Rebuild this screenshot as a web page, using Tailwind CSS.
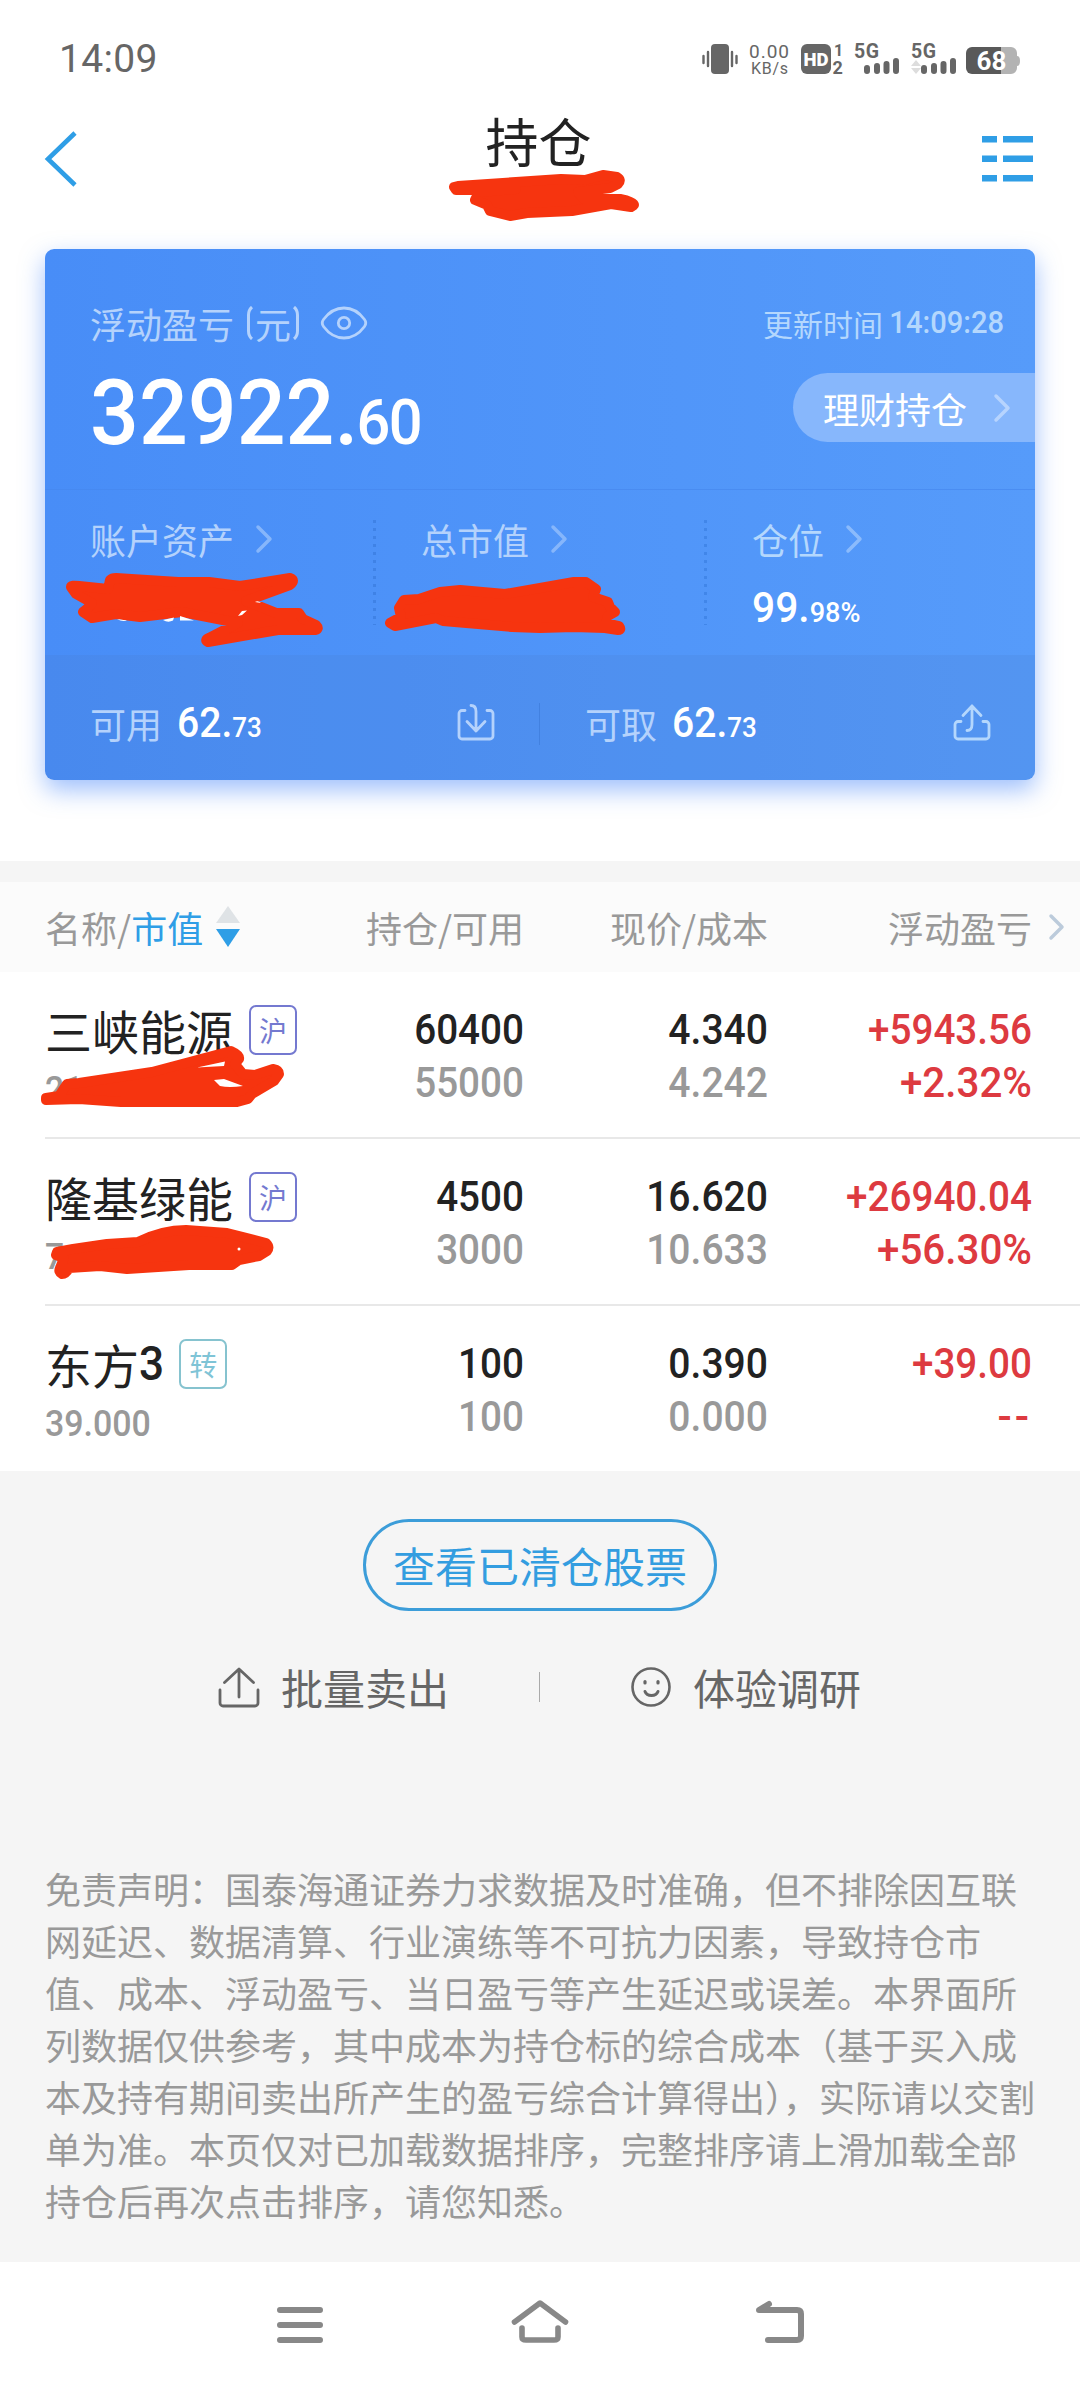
<!DOCTYPE html>
<html lang="zh-CN">
<head>
<meta charset="utf-8">
<title>持仓</title>
<script src="https://cdn.jsdelivr.net/npm/@tailwindcss/browser@4"></script>
</head>
<body class="bg-white">
<div class="relative flex h-[2388px] w-[1080px] flex-col overflow-hidden bg-white font-['Noto_Sans_CJK_SC',sans-serif] text-[#222] whitespace-nowrap">

  <!-- status bar -->
  <div class="flex h-[118px] shrink-0 items-center justify-between pr-[60px] pl-[59px] text-[#666]">
    <div class="font-['Roboto',sans-serif] text-[39px] leading-[40px] tracking-[0.3px]">14:09</div>
    <svg class="h-[48px] w-[320px] shrink-0" viewBox="700 35 320 48" fill="#666" font-family="Roboto, sans-serif">
      <rect x="711" y="44" width="18" height="30" rx="4"/>
      <path d="M703.500 56v7M708 52v14M732 52v14M736.500 56v7" stroke="#666" stroke-width="2.400" stroke-linecap="round"/>
      <text x="749" y="58" font-size="19" textLength="40">0.00</text>
      <text x="751" y="74" font-size="16" textLength="37">KB/s</text>
      <rect x="801" y="44" width="30" height="30" rx="6"/>
      <text x="803.500" y="66" font-size="19" font-weight="900" fill="#fff" textLength="25" lengthAdjust="spacingAndGlyphs">HD</text>
      <text x="834" y="56" font-size="16" font-weight="700">1</text>
      <text x="832.500" y="74" font-size="18" font-weight="700">2</text>
      <text x="854" y="58" font-size="19.500" font-weight="700" textLength="25">5G</text>
      <path d="M867 68v3M877 66v5M886.500 64v7M896 61v10" stroke="#666" stroke-width="6" stroke-linecap="round"/>
      <text x="911" y="58" font-size="19.500" font-weight="700" textLength="25">5G</text>
      <path d="M911 66l5-6 5 6zM911 68h10l-5 6z" fill="#ddd"/>
      <path d="M924 68v3M934 66v5M943.500 64v7M953 61v10" stroke="#666" stroke-width="6" stroke-linecap="round"/>
      <path d="M1001 47h10a6 6 0 0 1 6 6v3q3 0 3 5t-3 5v2a6 6 0 0 1-6 6h-10z" fill="#b3b3b3"/>
      <path d="M972 47h29v27h-29a6 6 0 0 1-6-6v-15a6 6 0 0 1 6-6z" fill="#595959"/>
      <text x="976.500" y="70" font-size="26" font-weight="700" fill="#fff" textLength="30">68</text>
    </svg>
  </div>

  <!-- title bar -->
  <header class="flex h-[131px] shrink-0 items-start justify-between pr-[47px] pl-[44px]">
    <svg class="mt-[13px] h-[56px] w-[52px]" viewBox="0 0 52 56" fill="none" stroke="#2f9ee6" stroke-width="4.600"><path d="M31 2L4 28l27 26"/></svg>
    <h1 class="pt-px text-[53px] leading-[42px]">持仓</h1>
    <svg class="mt-[17px] h-[48px] w-[52px]" viewBox="0 0 52 48" fill="#2f9ee6"><path d="M1 1h15v6.500H1zM22 1h30v6.500H22zM1 20.500h15v6.500H1zM22 20.500h30v6.500H22zM1 40h15v6.500H1zM22 40h30v6.500H22z"/></svg>
  </header>

  <!-- account card -->
  <section class="mx-[45px] flex h-[531px] shrink-0 flex-col overflow-hidden rounded-[9px] bg-linear-to-r from-[#488df7] to-[#569bfa] text-white shadow-[0_10px_24px_rgba(64,130,250,0.5)]">
    <div class="flex h-[241px] shrink-0 justify-between border-b border-[#4688ee]/70">
      <div class="pt-[50px] pl-[45px]">
        <div class="flex items-center text-[36px] leading-[48px] text-[#b4d2fc]">
          <span>浮动盈亏</span>
          <span class="ml-[12px] flex items-center"><svg class="h-[34px] w-[8px]" viewBox="0 0 8 34" fill="none" stroke="#b4d2fc" stroke-width="3"><path d="M6 1Q2.500 4 2.500 9v16q0 5 3.500 8"/></svg><span class="mx-px">元</span><svg class="h-[34px] w-[8px]" viewBox="0 0 8 34" fill="none" stroke="#b4d2fc" stroke-width="3"><path d="M2 1q3.500 3 3.500 8v16q0 5-3.500 8"/></svg></span>
          <svg class="ml-[20px] h-[34px] w-[48px]" viewBox="0 0 48 34" fill="none" stroke="#b4d2fc" stroke-width="2.800"><path d="M3.500 13.500Q12 2 24 2t20.500 11.500q2.500 3.500 0 7Q36 32 24 32T3.500 20.500q-2.500-3.500 0-7z"/><circle cx="24" cy="17" r="5.700"/></svg>
        </div>
        <div class="mt-[18px] w-max origin-left scale-x-[.945] font-['Roboto',sans-serif] text-[91px] leading-[96px] font-medium">32922.<span class="-ml-[2px] text-[63px] tracking-[-1.5px]">60</span></div>
      </div>
      <div class="flex flex-col items-end pt-[50px]">
        <div class="flex items-center pr-[31px] text-[30px] leading-[48px] text-[#b4d7fd]"><span class="mr-[7px]">更新时间</span><span class="-ml-[8px] origin-right scale-x-[.94] font-['Roboto',sans-serif] text-[31px] font-medium">14:09:28</span></div>
        <div class="mt-[26px] flex h-[69px] w-[242px] items-center justify-between rounded-l-full bg-[#87b7fc] pr-[24px] pl-[30px] text-[36px] leading-[60px]"><span>理财持仓</span><svg class="h-[30px] w-[18px]" viewBox="0 0 18 30" fill="none" stroke="#b7d4fe" stroke-width="3.500" stroke-linecap="round" stroke-linejoin="round"><path d="M3 3l12 12L3 27"/></svg></div>
      </div>
    </div>

    <div class="flex h-[165px] shrink-0">
      <div class="w-[328px] pt-[25px] pl-[45px]">
        <div class="flex items-center text-[36px] leading-[48px] text-[#b4d2fc]">账户资产<svg class="ml-[21px] h-[30px] w-[18px]" viewBox="0 0 18 30" fill="none" stroke="#86b6fb" stroke-width="3.500" stroke-linecap="round" stroke-linejoin="round"><path d="M3 3l12 12L3 27"/></svg></div>
      </div>
      <div class="mt-[30px] h-[105px] w-[3px] bg-[repeating-linear-gradient(to_bottom,#3f82e6_0_3px,transparent_3px_8px)]"></div>
      <div class="w-[328px] pt-[25px] pl-[45px]">
        <div class="flex items-center text-[36px] leading-[48px] text-[#b4d2fc]">总市值<svg class="ml-[21px] h-[30px] w-[18px]" viewBox="0 0 18 30" fill="none" stroke="#86b6fb" stroke-width="3.500" stroke-linecap="round" stroke-linejoin="round"><path d="M3 3l12 12L3 27"/></svg></div>
      </div>
      <div class="mt-[30px] h-[105px] w-[3px] bg-[repeating-linear-gradient(to_bottom,#4186e9_0_3px,transparent_3px_8px)]"></div>
      <div class="pt-[25px] pl-[45px]">
        <div class="flex items-center text-[36px] leading-[48px] text-[#b4d7fd]">仓位<svg class="ml-[21px] h-[30px] w-[18px]" viewBox="0 0 18 30" fill="none" stroke="#8bbbfc" stroke-width="3.500" stroke-linecap="round" stroke-linejoin="round"><path d="M3 3l12 12L3 27"/></svg></div>
        <div class="mt-[21px] w-max origin-left scale-x-[.97] font-['Roboto',sans-serif] text-[42px] leading-[48px] font-medium">99.<span class="text-[28px]">98%</span></div>
      </div>
    </div>

    <div class="flex h-[125px] shrink-0 items-center bg-[#4a7dcc]/20 pt-[12px]">
      <div class="flex w-[494px] items-center pr-[44px] pl-[45px]">
        <span class="-mt-[2px] text-[36px] leading-[48px] text-[#b4d2fc]">可用</span>
        <span class="mt-[3px] ml-[15px] origin-left scale-x-[.93] font-['Roboto',sans-serif] text-[42px] leading-[48px] font-medium">62.<span class="text-[28px]">73</span></span>
        <svg class="-mt-[3px] ml-auto h-[37px] w-[38px]" viewBox="0 0 38 37" fill="none" stroke="#b4d2fc" stroke-width="2.800" stroke-linecap="round" stroke-linejoin="round"><path d="M8 6.500H5a3 3 0 0 0-3 3V32a3 3 0 0 0 3 3h28a3 3 0 0 0 3-3V9.500a3 3 0 0 0-3-3h-3M14 1.500q5 0 5 6V27M10 17.500l9 9.500 9-9.500"/></svg>
      </div>
      <div class="h-[42px] w-px bg-[#4281e0]"></div>
      <div class="flex flex-1 items-center pr-[44px] pl-[45px]">
        <span class="-mt-[2px] text-[36px] leading-[48px] text-[#b4d2fc]">可取</span>
        <span class="mt-[3px] ml-[15px] origin-left scale-x-[.93] font-['Roboto',sans-serif] text-[42px] leading-[48px] font-medium">62.<span class="text-[28px]">73</span></span>
        <svg class="-mt-[3px] ml-auto h-[37px] w-[38px]" viewBox="0 0 38 37" fill="none" stroke="#b4d7fd" stroke-width="2.800" stroke-linecap="round" stroke-linejoin="round"><path d="M8 17.500H5a3 3 0 0 0-3 3V32a3 3 0 0 0 3 3h28a3 3 0 0 0 3-3V20.500a3 3 0 0 0-3-3h-3M14 26.500q5 0 5-6V2M10 11.500L19 2l9 9.500"/></svg>
      </div>
    </div>
  </section>

  <!-- holdings table -->
  <div class="mt-[81px] h-[21px] shrink-0 bg-[#f5f5f5]"></div>
  <div class="grid h-[90px] shrink-0 grid-cols-[260px_219px_244px_264px_1fr] items-center bg-[#fbfbfb] pb-[1px] pl-[45px] text-[36px] leading-[48px] text-[#999]">
    <div class="flex items-center">名称/<span class="text-[#2f9ee6]">市值</span><svg class="ml-[13px] h-[41px] w-[24px]" viewBox="0 0 24 41"><path d="M12 0l12 17H0z" fill="#dfe3e6"/><path d="M0 23h24L12 41z" fill="#2f9ee6"/></svg></div>
    <div class="text-right">持仓/可用</div>
    <div class="text-right">现价/成本</div>
    <div class="text-right">浮动盈亏</div>
    <svg class="ml-[16px] h-[28px] w-[18px]" viewBox="0 0 18 28" fill="none" stroke="#bccbdb" stroke-width="3.500" stroke-linecap="round" stroke-linejoin="round"><path d="M3 3l11 11L3 25"/></svg>
  </div>

  <div class="ml-[45px] grid h-[167px] shrink-0 grid-cols-[260px_219px_244px_264px] border-b-2 border-[#e8e8e8]">
    <div class="pt-[28px]">
      <div class="flex items-center text-[47px] leading-[60px]">三峡能源<span class="ml-[16px] flex h-[50px] w-[48px] items-center justify-center rounded-[7px] border-2 border-[#7479d0] text-[28px] leading-[40px] text-[#7479d0]">沪</span></div>
      <div class="mt-[10px] w-max origin-left scale-x-[.92] font-['Roboto',sans-serif] text-[36.500px] leading-[40px] font-medium text-[#999]">21</div>
    </div>
    <div class="pt-[31px] font-['Roboto',sans-serif] text-[42px] leading-[53px] font-medium"><div class="origin-right scale-x-[.92] text-right">60400</div><div class="origin-right scale-x-[.92] text-right text-[#999]">55000</div></div>
    <div class="pt-[31px] font-['Roboto',sans-serif] text-[42px] leading-[53px] font-medium"><div class="origin-right scale-x-[.93] text-right">4.340</div><div class="origin-right scale-x-[.93] text-right text-[#999]">4.242</div></div>
    <div class="pt-[31px] font-['Roboto',sans-serif] text-[42px] leading-[53px] font-medium text-[#dd3a40]"><div class="origin-right scale-x-[.92] text-right">+5943.56</div><div class="origin-right scale-x-[.96] text-right">+2.32%</div></div>
  </div>

  <div class="ml-[45px] grid h-[167px] shrink-0 grid-cols-[260px_219px_244px_264px] border-b-2 border-[#e8e8e8]">
    <div class="pt-[28px]">
      <div class="flex items-center text-[47px] leading-[60px]">隆基绿能<span class="ml-[16px] flex h-[50px] w-[48px] items-center justify-center rounded-[7px] border-2 border-[#7479d0] text-[28px] leading-[40px] text-[#7479d0]">沪</span></div>
      <div class="mt-[10px] w-max origin-left scale-x-[.92] font-['Roboto',sans-serif] text-[36.500px] leading-[40px] font-medium text-[#999]">7</div>
    </div>
    <div class="pt-[31px] font-['Roboto',sans-serif] text-[42px] leading-[53px] font-medium"><div class="origin-right scale-x-[.92] text-right">4500</div><div class="origin-right scale-x-[.92] text-right text-[#999]">3000</div></div>
    <div class="pt-[31px] font-['Roboto',sans-serif] text-[42px] leading-[53px] font-medium"><div class="origin-right scale-x-[.93] text-right">16.620</div><div class="origin-right scale-x-[.93] text-right text-[#999]">10.633</div></div>
    <div class="pt-[31px] font-['Roboto',sans-serif] text-[42px] leading-[53px] font-medium text-[#dd3a40]"><div class="origin-right scale-x-[.92] text-right">+26940.04</div><div class="origin-right scale-x-[.96] text-right">+56.30%</div></div>
  </div>

  <div class="ml-[45px] grid h-[165px] shrink-0 grid-cols-[260px_219px_244px_264px]">
    <div class="pt-[28px]">
      <div class="flex items-center text-[47px] leading-[60px]">东方<span class="origin-left scale-x-[.92] font-['Roboto',sans-serif] text-[48px] font-medium">3</span><span class="ml-[13px] flex h-[50px] w-[48px] items-center justify-center rounded-[7px] border-2 border-[#86c3cf] text-[28px] leading-[40px] text-[#7fc4d6]">转</span></div>
      <div class="mt-[10px] w-max origin-left scale-x-[.93] font-['Roboto',sans-serif] text-[36.500px] leading-[40px] font-medium text-[#999]">39.000</div>
    </div>
    <div class="pt-[31px] font-['Roboto',sans-serif] text-[42px] leading-[53px] font-medium"><div class="origin-right scale-x-[.92] text-right">100</div><div class="origin-right scale-x-[.92] text-right text-[#999]">100</div></div>
    <div class="pt-[31px] font-['Roboto',sans-serif] text-[42px] leading-[53px] font-medium"><div class="origin-right scale-x-[.93] text-right">0.390</div><div class="origin-right scale-x-[.93] text-right text-[#999]">0.000</div></div>
    <div class="pt-[31px] font-['Roboto',sans-serif] text-[42px] leading-[53px] font-medium text-[#dd3a40]"><div class="origin-right scale-x-[.92] text-right">+39.00</div><div class="origin-right text-right tracking-[3px]">--</div></div>
  </div>

  <!-- actions and disclaimer -->
  <div class="flex h-[791px] shrink-0 flex-col bg-[#f5f5f5] pt-[48px]">
    <div class="flex h-[92px] w-[354px] items-center justify-center self-center rounded-full border-3 border-[#3c9dd9] text-[42px] leading-[60px] text-[#339de0]">查看已清仓股票</div>
    <div class="mt-[46px] flex items-center pl-[217px] text-[42px] leading-[60px] text-[#666]">
      <svg class="h-[42px] w-[44px]" viewBox="0 0 44 42" fill="none" stroke="#666" stroke-width="2.800" stroke-linecap="round" stroke-linejoin="round"><path d="M3 24v13a3 3 0 0 0 3 3h32a3 3 0 0 0 3-3V24M22 31V4M7.500 16.500L22 3l14.500 13.500"/></svg>
      <span class="ml-[20px]">批量卖出</span>
      <span class="ml-[90px] h-[30px] w-px bg-[#aaa]"></span>
      <svg class="ml-[90px] h-[42px] w-[42px]" viewBox="0 0 42 42" fill="none" stroke="#666" stroke-width="2.600" stroke-linecap="round"><circle cx="21" cy="21" r="18.500"/><path d="M15 15.500v1.500M28 15.500v1.500" stroke-width="3.200"/><path d="M15 25.500q1.500 4 6.500 4t6.500-4" stroke-width="3"/></svg>
      <span class="ml-[21px]">体验调研</span>
    </div>
    <p class="mt-[145px] pl-[45px] text-[36px] leading-[52px] text-[#999]">免责声明：国泰海通证券力求数据及时准确，但不排除因互联<br>网延迟、数据清算、行业演练等不可抗力因素，导致持仓市<br>值、成本、浮动盈亏、当日盈亏等产生延迟或误差。本界面所<br>列数据仅供参考，其中成本为持仓标的综合成本（基于买入成<br>本及持有期间卖出所产生的盈亏综合计算得出），实际请以交割<br>单为准。本页仅对已加载数据排序，完整排序请上滑加载全部<br>持仓后再次点击排序，请您知悉。</p>
  </div>

  <!-- system navigation -->
  <nav class="flex h-[126px] shrink-0 items-center justify-between px-[270px]">
    <svg class="h-[60px] w-[60px]" viewBox="270 2295 60 60" stroke="#888" stroke-width="6" stroke-linecap="round"><path d="M280 2310h40M280 2325h40M280 2340h40"/></svg>
    <svg class="h-[60px] w-[60px]" viewBox="510 2295 60 60" fill="none" stroke="#888" stroke-width="5.600" stroke-linecap="round" stroke-linejoin="round"><path d="M514.500 2322L540 2303l25.500 19M522 2328v9q0 3 4 3h28q4 0 4-3v-9"/></svg>
    <svg class="h-[60px] w-[60px]" viewBox="750 2295 60 60" fill="none" stroke="#888" stroke-width="6" stroke-linecap="round" stroke-linejoin="round"><path d="M768 2340h29q4 0 4-4v-22q0-4-4-4h-38l10-6"/></svg>
  </nav>

  <!-- marker strokes drawn over the private values -->
  <svg class="pointer-events-none absolute top-0 left-0 h-[2388px] w-[1080px]" viewBox="0 0 1080 2388" fill="#f6340f" stroke="#f6340f" stroke-width="10" stroke-linejoin="round">
    <path stroke="#222" stroke-width="2.500" d="M589 192l-3 5M600 190q0 4-3 8"/>
    <path d="M454 187L458 186 516 182 561 179 585 180 603 175 617 177Q622 180 618 184L610 188 578 192 584 199 620 199Q634 202 634 205L631 207 611 204 572 211 527 213 510 216 490 211 487 205 475 200 479 192 516 189 456 190Z"/>
    <path d="M71 587Q71 585 79 586L108 589 110 580Q112 578 116 578L178 582 209 582 240 586 290 578Q296 580 290 585L246 601 276 613 299 613 303 619 316 625Q320 629 315 630L278 630 208 642Q204 640 209 638L238 623 182 612 140 617 116 614 92 618 83 612 88 608 92 603 76 594Z"/>
    <path stroke="none" fill="#fff" d="M117 619q5 3 10 1.500zM163 620q5 3 10 .500l1-3zM180 616l14 4.500h-14zM238 616l4-5 5-.500-5 4.500zM255 602q3-2 6 1z"/>
    <path d="M390 623L401 617 399 608 404 600 419 599 440 592 460 590 505 594 540 588 574 582 586 582 596 589 593 597 608 602 610 607 615 612 608 616 606 623 619 626Q622 630 618 630L605 628 574 627 540 628 512 627 443 621 436 618 395 626Z"/>
    <path d="M46 1098L59 1096 67 1084 79 1083 152 1072 231 1051Q240 1055 239 1059L235 1064 243 1074 255 1075 273 1069Q279 1070 279 1074L274 1081 252 1094 248 1099 237 1102 189 1102 121 1102 79 1099 46 1100Z"/>
    <path stroke="none" fill="#fff" d="M214 1080l10-1 19 7q-14 2-23 0zM197 1067.500l28-6-1 4.500z"/>
    <path d="M56 1255L57 1252 73 1249 107 1244 138 1242Q162 1230 186 1230L227 1233 243 1237 266 1243Q270 1247 267 1251L259 1256 239 1260 232 1265 189 1265 127 1269 100 1266 69 1268Q66 1274 62 1274 58 1272 60 1268L64 1258Z"/>
    <circle cx="239" cy="1249" r="1.500" fill="#fff" stroke="none"/>
  </svg>
</div>
</body>
</html>
